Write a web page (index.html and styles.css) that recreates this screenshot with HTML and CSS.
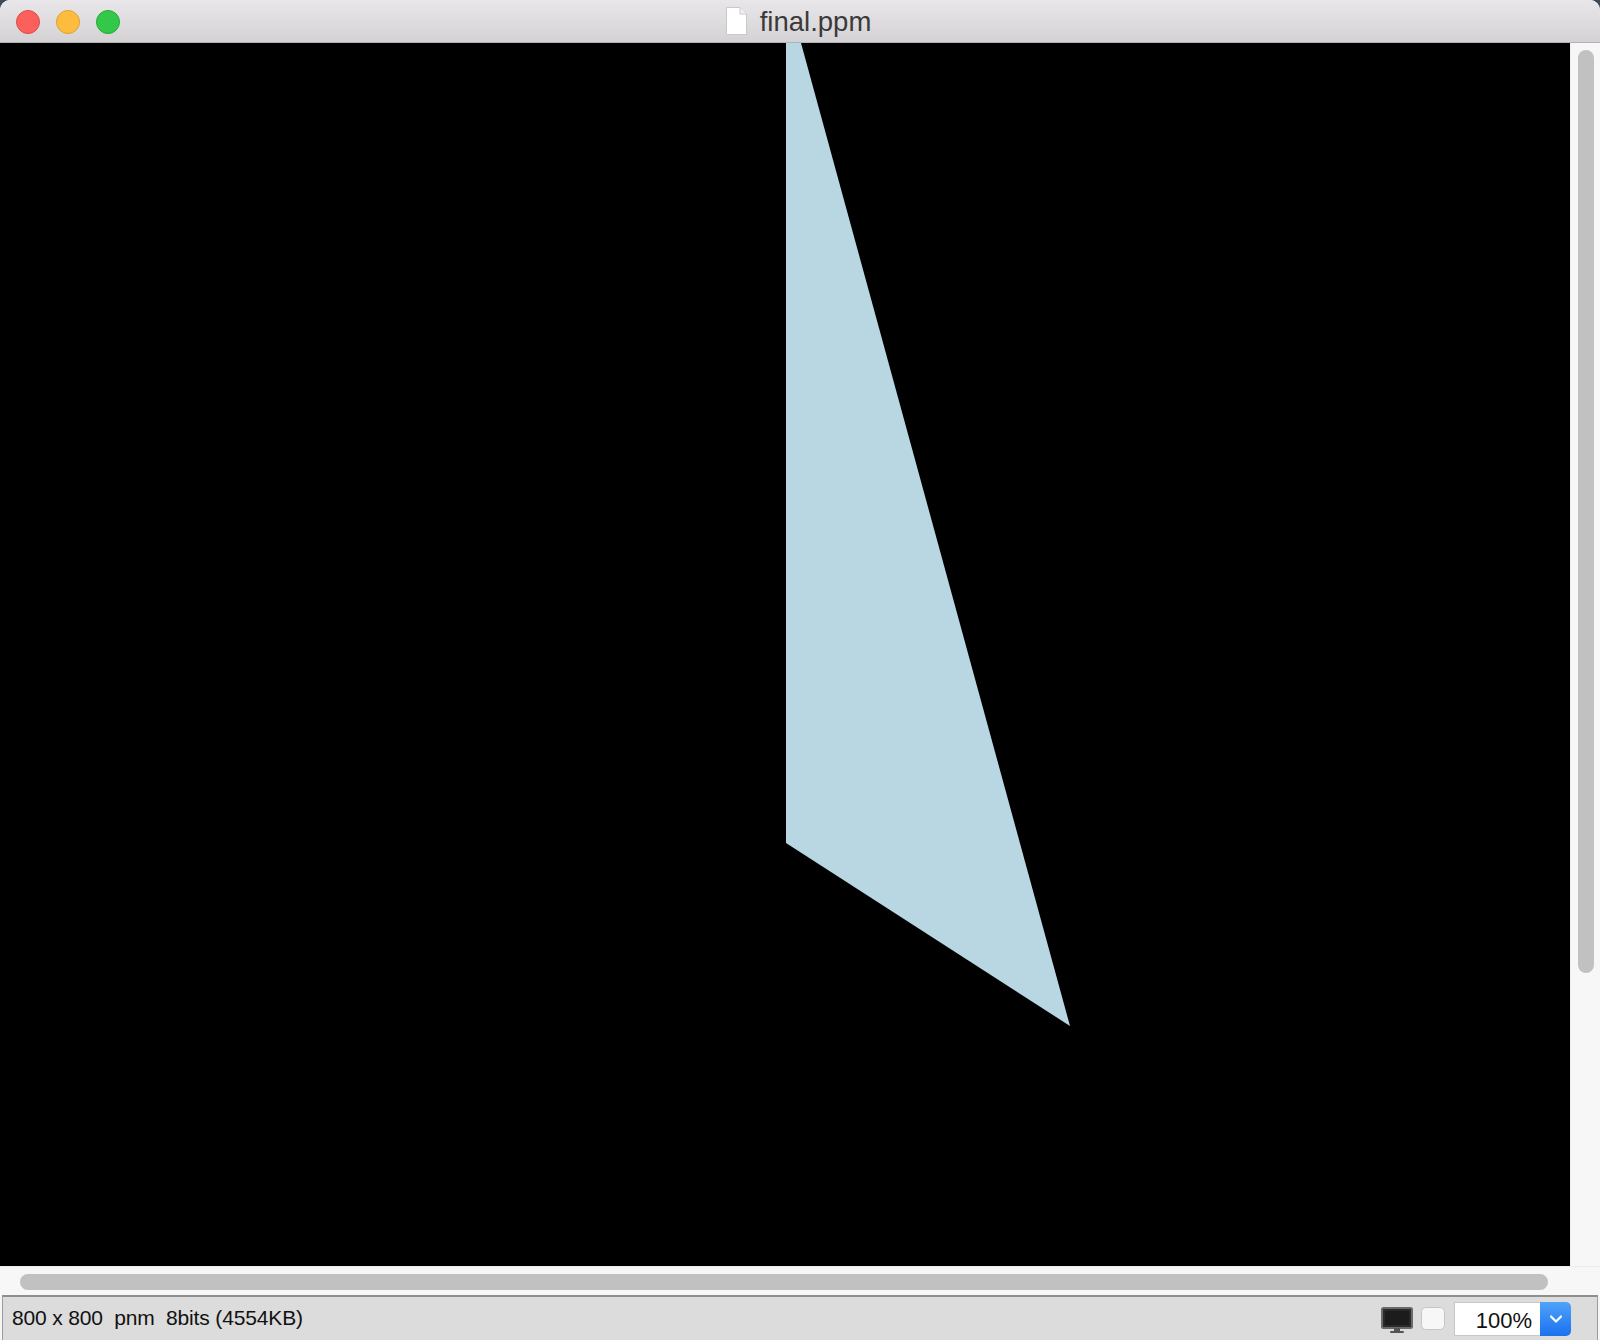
FILE: index.html
```html
<!DOCTYPE html>
<html>
<head>
<meta charset="utf-8">
<title>final.ppm</title>
<link rel="stylesheet" href="styles.css">
</head>
<body>
<div class="window">
  <div class="titlebar">
    <div class="lights">
      <span class="light red"></span>
      <span class="light yellow"></span>
      <span class="light green"></span>
    </div>
    <div class="title">
      <svg class="doc-icon" width="23" height="30" viewBox="0 0 23 30">
        <path d="M1.5 1.5 H15 L21.5 8 V28.5 H1.5 Z" fill="#ffffff" stroke="#c9c9c9" stroke-width="1"/>
        <path d="M15 1.5 V8 H21.5" fill="#f0f0f0" stroke="#c9c9c9" stroke-width="1"/>
      </svg>
      <span class="title-text">final.ppm</span>
    </div>
  </div>
  <div class="main">
    <div class="canvas">
      <svg class="drawing" width="1570" height="1223" viewBox="0 0 1570 1223">
        <polygon points="786,0 801,0 1070,983 786,800" fill="#b8d7e3"/>
      </svg>
    </div>
    <div class="vscroll"><div class="vthumb"></div></div>
  </div>
  <div class="hscroll"><div class="hthumb"></div></div>
  <div class="statusbar">
    <span class="info">800 x 800  pnm  8bits (4554KB)</span>
    <div class="controls">
      <svg class="monitor" width="32" height="27" viewBox="0 0 32 27">
        <rect x="1" y="1" width="30" height="20" rx="1.5" fill="#2a2a2a" stroke="#6a6a6a" stroke-width="2"/>
        <rect x="4" y="4" width="24" height="14" fill="#1c1c1c"/>
        <rect x="13" y="21" width="6" height="3" fill="#555"/>
        <rect x="9" y="24" width="14" height="2" rx="1" fill="#555"/>
      </svg>
      <span class="checkbox"></span>
      <div class="zoom">
        <span class="zoom-value">100%</span>
        <span class="zoom-btn">
          <svg width="14" height="10" viewBox="0 0 14 10"><path d="M2 2.5 L7 7.5 L12 2.5" fill="none" stroke="#ffffff" stroke-width="2.2" stroke-linecap="round" stroke-linejoin="round"/></svg>
        </span>
      </div>
    </div>
  </div>
</div>
</body>
</html>
```
FILE: styles.css
```css
html, body {
  margin: 0;
  padding: 0;
}
body {
  width: 1600px;
  height: 1340px;
  background: #3d4a5c;
  overflow: hidden;
  font-family: "Liberation Sans", Arial, sans-serif;
}
.window {
  width: 1600px;
  height: 1340px;
  display: flex;
  flex-direction: column;
  background: #f6f6f6;
  border-radius: 10px 10px 0 0;
  overflow: hidden;
}
.titlebar {
  height: 42px;
  flex: none;
  border-bottom: 1px solid #b3b3b3;
  background: linear-gradient(#e9e7e9, #d4d2d4);
  display: flex;
  align-items: center;
  position: relative;
}
.lights {
  display: flex;
  gap: 16px;
  padding-left: 16px;
  padding-top: 2px;
}
.light {
  width: 22px;
  height: 22px;
  border-radius: 50%;
  display: block;
}
.red { background: #fc605c; border: 1px solid #de4a44; }
.yellow { background: #fdbc40; border: 1px solid #dfa02c; }
.green { background: #34c84a; border: 1px solid #24aa33; }
.title {
  position: absolute;
  left: 0;
  right: 0;
  top: 0;
  height: 42px;
  display: flex;
  justify-content: center;
  align-items: center;
  gap: 12px;
  padding-right: 4px;
}
.doc-icon {
  display: block;
  margin-top: -1px;
}
.title-text {
  font-size: 27.5px;
  color: #3a3a3a;
  margin-top: 1px;
}
.main {
  height: 1223px;
  flex: none;
  display: flex;
}
.canvas {
  width: 1570px;
  height: 1223px;
  background: #000000;
  overflow: hidden;
}
.drawing {
  display: block;
}
.vscroll {
  width: 30px;
  background: #f7f7f7;
  border-left: 1px solid #ececec;
  box-sizing: border-box;
  padding: 7px 0 0 7px;
}
.vthumb {
  width: 16px;
  height: 923px;
  border-radius: 8px;
  background: #c1c1c1;
}
.hscroll {
  height: 29px;
  flex: none;
  background: #f7f7f7;
  border-top: 1px solid #ececec;
  box-sizing: border-box;
  padding: 7px 0 0 20px;
}
.hthumb {
  width: 1528px;
  height: 16px;
  border-radius: 8px;
  background: #c1c1c1;
}
.statusbar {
  flex: 1;
  display: flex;
  align-items: center;
  background: #dcdcdc;
  border-top: 2px solid #8e8e8e;
  border-left: 1px solid #9c9c9c;
  border-right: 1px solid #9c9c9c;
  margin: 0 2px;
  padding-left: 9px;
  padding-right: 26px;
}
.info {
  white-space: pre;
  font-size: 21px;
  letter-spacing: -0.15px;
  color: #111111;
  margin-top: -2px;
}
.controls {
  margin-left: auto;
  display: flex;
  align-items: center;
}
.monitor {
  display: block;
  margin-top: 3px;
}
.checkbox {
  display: block;
  width: 22px;
  height: 21px;
  margin-left: 8px;
  border: 1px solid #c6c6c6;
  border-radius: 5px;
  background: #f7f7f7;
}
.zoom {
  display: flex;
  margin-left: 9px;
  height: 34px;
}
.zoom-value {
  width: 86px;
  box-sizing: border-box;
  height: 34px;
  background: #ffffff;
  border: 1px solid #c8c8c8;
  border-right: none;
  text-align: right;
  padding-right: 8px;
  font-size: 22px;
  line-height: 36px;
  color: #111111;
}
.zoom-btn {
  width: 31px;
  height: 34px;
  border-radius: 0 5px 5px 0;
  background: linear-gradient(#4ea3fa, #1c70ef);
  display: flex;
  align-items: center;
  justify-content: center;
}
.zoom-btn svg {
  display: block;
}
```
